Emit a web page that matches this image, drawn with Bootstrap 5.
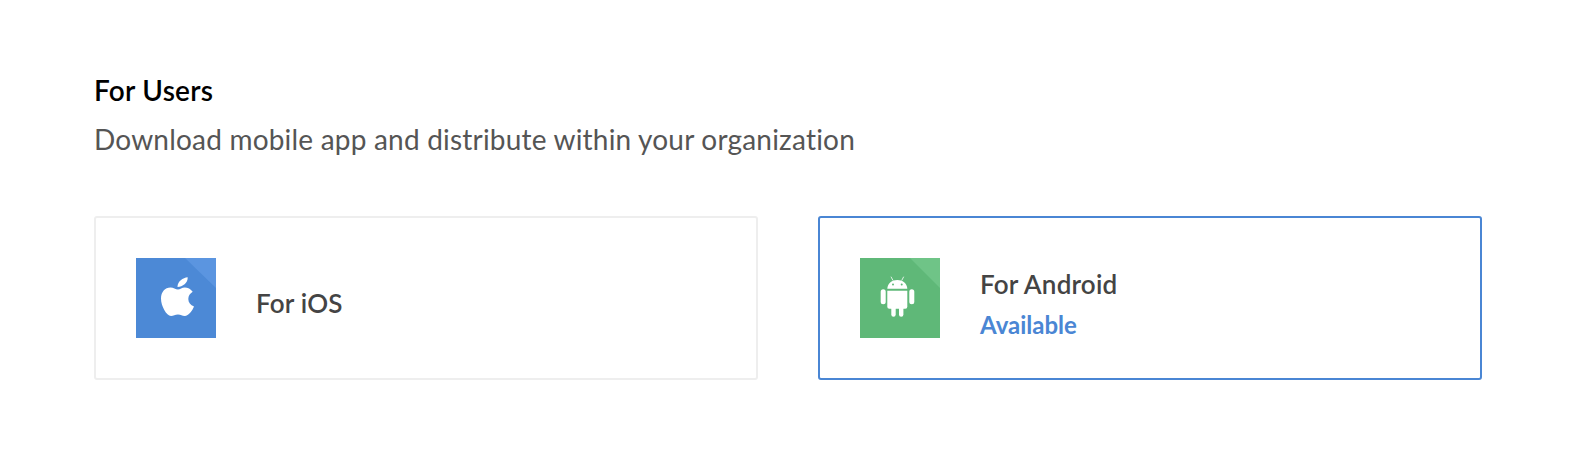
<!DOCTYPE html>
<html lang="en">
<head>
    <meta charset="UTF-8" />
    <meta name="viewport" content="width=device-width, initial-scale=1.0"/>
    <link href="https://cdn.jsdelivr.net/npm/bootstrap@5.3.0/dist/css/bootstrap.min.css" rel="stylesheet"/>
    <title>For Users</title>
    <style>
        body { font-family: Lato, "Liberation Sans", sans-serif; background: #fff; font-variant-ligatures: none; }
        .page-wrap { padding: 76px 94px 0 94px; }
        .page-title { font-size: 28px; font-weight: 600; letter-spacing: .25px; line-height: 29px; color: #000; margin: 0 0 17px 0; }
        .page-sub { font-size: 28px; letter-spacing: .2px; line-height: 34px; color: #555; margin: 0 0 60px 0; }
        .app-row { gap: 60px; }
        .app-tile { width: 664px; height: 164px; border: 2px solid #eee; border-radius: 3px; padding: 0 0 0 40px; gap: 40px; }
        .app-tile.picked { border-color: #4a86d4; }
        .tile-icon { width: 80px; height: 80px; flex: none; display: block; }
        .tile-text { padding-top: 10px; }
        .app-name { font-size: 26px; font-weight: 600; letter-spacing: .2px; line-height: 32px; color: #444; }
        .app-status { font-size: 24px; font-weight: 700; line-height: 28px; color: #4a86d4; margin-top: 11px; }
    </style>
</head>
<body>
    <div class="page-wrap">
        <h1 class="page-title">For Users</h1>
        <p class="page-sub">Download mobile app and distribute within your organization</p>

        <div class="d-flex app-row">
            <!-- iOS -->
            <div class="app-tile d-flex align-items-center">
                <svg class="tile-icon" viewBox="0 0 80 80">
                    <rect width="80" height="80" fill="#4c89d6"/>
                    <polygon points="49,0 80,0 80,30" fill="#5b95e0"/>
                    <path d="M51.700 19.300C47 19.800 41.300 23.500 41.500 29C46.500 28.800 52 25 51.700 19.300Z" fill="#fff"/>
                    <path d="M42 31.500C39.500 31.500 37.500 29.500 34.500 29.500C29 29.500 25 34 25 40.500C25 48 30.500 58 35 58C37.500 58 39 56.500 42 56.500C45 56.500 46 58 48.800 58C52.500 58 56.500 52.500 58 48.500C54.500 47 52.300 44.500 52.300 41C52.300 37.800 54 35.500 56.700 33.800C54.700 31 51.700 29.500 48.800 29.500C46 29.500 44 31.500 42 31.500Z" fill="#fff"/>
                </svg>
                <div class="app-name tile-text">For iOS</div>
            </div>
            <!-- Android -->
            <div class="app-tile picked d-flex align-items-center">
                <svg class="tile-icon" viewBox="0 0 80 80">
                    <rect width="80" height="80" fill="#5fb878"/>
                    <polygon points="50,0 80,0 80,30" fill="#6fc487"/>
                    <g fill="#fff">
                        <path d="M27.300 30.700c.3-5.300 4.800-8.700 10-8.700s9.700 3.400 10 8.700z"/>
                        <path d="M27.300 32.700h20v16a2 2 0 0 1-2 2h-16a2 2 0 0 1-2-2z"/>
                        <rect x="20.700" y="31.300" width="5" height="15" rx="2.500"/>
                        <rect x="49.300" y="31.300" width="5" height="15" rx="2.500"/>
                        <rect x="31.300" y="48" width="4.400" height="10.700" rx="2.200"/>
                        <rect x="39" y="48" width="4.400" height="10.700" rx="2.200"/>
                    </g>
                    <path d="M31 18.700l2 3.800M43.700 18.700l-2 3.800" stroke="#fff" stroke-width=".8" fill="none"/>
                    <circle cx="33" cy="26.500" r="1" fill="#5fb878"/>
                    <circle cx="41.700" cy="26.500" r="1" fill="#5fb878"/>
                </svg>
                <div class="tile-text">
                    <div class="app-name">For Android</div>
                    <div class="app-status">Available</div>
                </div>
            </div>
        </div>
    </div>
</body>
</html>
